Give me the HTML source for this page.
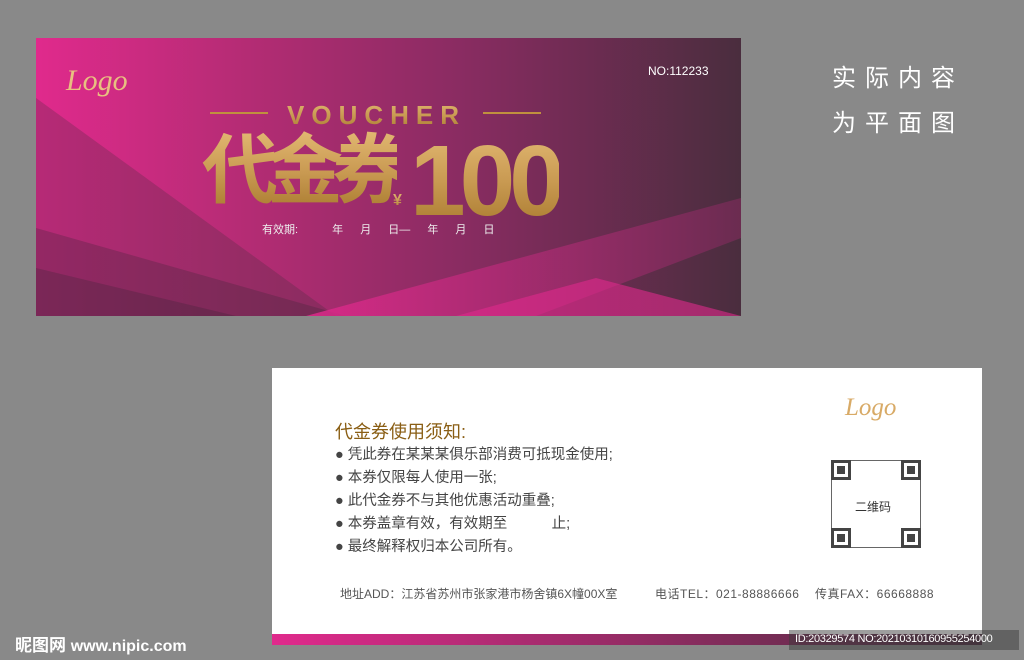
<!DOCTYPE html>
<html><head><meta charset="utf-8"><style>
*{margin:0;padding:0}
body{width:1024px;height:660px;background:#898989;position:relative;overflow:hidden;font-family:"Liberation Sans","Noto Sans CJK SC",sans-serif}
.a{position:absolute;white-space:nowrap}
.gold{background:linear-gradient(180deg,#e2b872 0%,#c99a52 50%,#a87a2e 100%);-webkit-background-clip:text;background-clip:text;color:transparent}
.logo{font-family:"Liberation Serif","DejaVu Serif",serif;font-style:italic;color:#e8c080}
.q{position:absolute;width:14px;height:14px;border:3px solid #444;background:#fff}
.q:after{content:"";position:absolute;left:3px;top:3px;width:8px;height:8px;background:#444}
</style></head><body>
<div class="a" style="left:36px;top:38px;width:705px;height:278px;overflow:hidden;background:linear-gradient(90deg,#e02a8c 0%,#b42c74 30%,#8a2c62 60%,#4a2d3e 100%)">
<svg width="705" height="278" style="position:absolute;left:0;top:0">
<defs>
<linearGradient id="p" x1="0" x2="1"><stop offset="0" stop-color="#e02a8c"/><stop offset="1" stop-color="#8a2c62" stop-opacity="0.6"/></linearGradient>
</defs>
<polygon points="0,60 300,278 0,278" fill="#3c2a38" opacity="0.25"/>
<polygon points="0,190 310,278 0,278" fill="#2f2230" opacity="0.25"/>
<polygon points="0,230 200,278 0,278" fill="#2f2230" opacity="0.25"/>
<polygon points="270,278 705,160 705,200 500,278" fill="url(#p)" opacity="0.85"/>
<polygon points="420,278 560,240 705,278" fill="#e02a8c" opacity="0.6"/>
</svg>
<div class="a logo" style="left:30px;top:26px;font-size:30px">Logo</div>
<div class="a" style="left:612px;top:26px;font-size:12px;color:#fff">NO:112233</div>
<div class="a" style="left:174px;top:74px;width:58px;height:2px;background:#c0903e"></div>
<div class="a" style="left:447px;top:74px;width:58px;height:2px;background:#c0903e"></div>
<div class="a gold" style="left:251px;top:62px;font-size:26px;letter-spacing:7px;font-weight:bold">VOUCHER</div>
<div class="a gold" style="left:166px;top:92px;font-size:76px;font-weight:bold;letter-spacing:-11px;line-height:1.1">代金券</div>
<div class="a gold" style="left:357px;top:154px;font-size:16px;font-weight:bold">¥</div>
<div class="a gold" style="left:374px;top:93px;font-size:100px;font-weight:bold;letter-spacing:-6px;line-height:1">100</div>
<div class="a" style="left:226px;top:183px;font-size:11px;color:#eee;word-spacing:14px">有效期:&nbsp; 年 月 日— 年 月 日</div>
</div>
<div class="a" style="left:832px;top:56px;font-size:24px;color:#fff;letter-spacing:9px;line-height:45px">实际内容<br>为平面图</div>
<div class="a" style="left:272px;top:368px;width:710px;height:266px;background:#fff"></div>
<div class="a" style="left:272px;top:634px;width:710px;height:11px;background:linear-gradient(90deg,#e02a8c,#4a2d3e)"></div>
<div class="a logo" style="left:845px;top:394px;font-size:25px;color:#d8aa66">Logo</div>
<div class="a" style="left:335px;top:418px;font-size:18px;color:#8a5e14">代金券使用须知:</div>
<div class="a" style="left:335px;top:444px;font-size:14.5px;color:#444;line-height:23px">● 凭此券在某某某俱乐部消费可抵现金使用;<br>● 本券仅限每人使用一张;<br>● 此代金券不与其他优惠活动重叠;<br>● 本券盖章有效，有效期至 &nbsp; &nbsp; &nbsp; &nbsp; &nbsp; 止;<br>● 最终解释权归本公司所有。</div>
<div class="a" style="left:831px;top:460px;width:90px;height:88px;border:1px solid #666;box-sizing:border-box"></div>
<div class="q" style="left:831px;top:460px"></div>
<div class="q" style="left:901px;top:460px"></div>
<div class="q" style="left:831px;top:528px"></div>
<div class="q" style="left:901px;top:528px"></div>
<div class="a" style="left:855px;top:498px;font-size:12px;color:#333">二维码</div>
<div class="a" style="left:340px;top:585px;font-size:12px;color:#555">地址ADD：江苏省苏州市张家港市杨舍镇6X幢00X室</div>
<div class="a" style="left:655px;top:585px;font-size:12px;color:#555;letter-spacing:0.5px">电话TEL：021-88886666</div>
<div class="a" style="left:815px;top:585px;font-size:12px;color:#555;letter-spacing:0.5px">传真FAX：66668888</div>
<div class="a" style="left:789px;top:630px;width:230px;height:20px;background:rgba(60,60,60,0.5)"></div>
<div class="a" style="left:795px;top:633px;font-size:11px;color:#fff;letter-spacing:-0.3px">ID:20329574 NO:20210310160955254000</div>
<div class="a" style="left:15px;top:631px;font-size:17px;color:#fff;font-weight:bold">昵图网 <span style="font-size:16px">www.nipic.com</span></div>
</body></html>
